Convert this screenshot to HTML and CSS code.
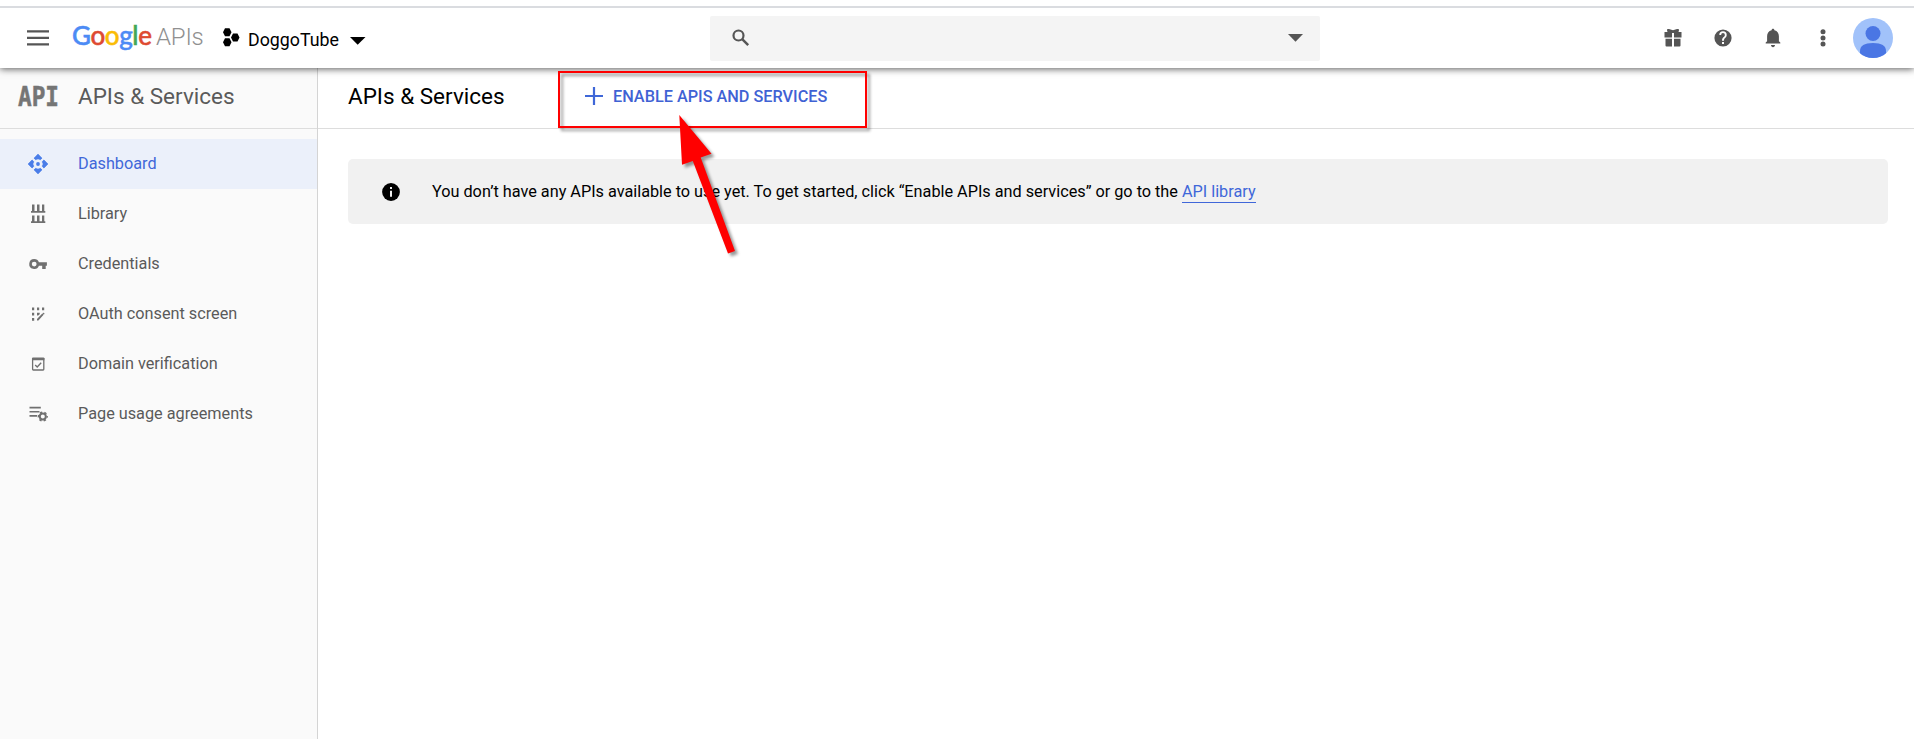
FILE: index.html
```html
<!DOCTYPE html>
<html lang="en">
<head>
<meta charset="utf-8">
<title>APIs &amp; Services</title>
<link rel="stylesheet" href="styles.css">
</head>
<body>
<header class="topbar">
  <div class="brand">
    <svg class="menu" width="24" height="16" viewBox="0 0 24 16"><path fill="#555" d="M1 .3h22v2.2H1zM1 6.8h22V9H1zM1 13.300h22v2.200H1z"/></svg>
    <div class="logo"><span class="google"><i class="b">G</i><i class="r">o</i><i class="y">o</i><i class="b">g</i><i class="g">l</i><i class="r">e</i></span><span class="apis">APIs</span></div>
    <div class="project">
      <svg width="17" height="19" viewBox="0 0 17 19"><path d="M2 .3h4.500L8.500 4.300 6.500 8.200H2L0 4.300zM10 5.500h4.500l2 4-2 4H10l-2-4zM2 10.300h4.500l2 4-2 4H2l-2-4z"/></svg>
      <span class="project-name">DoggoTube</span>
      <svg class="caret" width="16" height="8" viewBox="0 0 16 8"><path d="M0 0h15.500L7.700 7.700z"/></svg>
    </div>
  </div>
  <div class="search">
    <svg width="18" height="18" viewBox="0 0 18 18"><circle cx="6.500" cy="6.500" r="5" fill="none" stroke="#555" stroke-width="2.200"/><path d="M10.200 10.200l6 6" stroke="#555" stroke-width="2.500"/></svg>
    <svg width="15" height="8" viewBox="0 0 15 8"><path fill="#555" d="M0 0h15L7.500 7.700z"/></svg>
  </div>
  <div class="tools">
    <svg width="20" height="20" viewBox="0 0 20 20" fill="#555"><path d="M4 2.200Q3.500.6 6 1l4 1.300L14 1q2.500-.4 2 1.200L15.500 4H18.500V9.500H11V5H9v4.500H1.500V4H4.500zM2.500 10.700H9V18.500H3.500q-1 0-1-1zM11 10.700h6.500v6.800q0 1-1 1H11z"/></svg>
    <svg width="20" height="20" viewBox="2 2 20 20" fill="#555"><path d="M12 3.400a8.600 8.600 0 1 0 0 17.200 8.600 8.600 0 0 0 0-17.200zm1 14.600h-2v-2h2v2zm1.900-6.800l-.8.900c-.7.700-1.100 1.300-1.100 2.700h-2v-.5c0-1.100.4-2 1.100-2.700l1.200-1.200c.4-.4.600-.8.600-1.400a1.900 1.900 0 0 0-3.800 0H8.300a3.700 3.700 0 1 1 7.400 0c0 .9-.3 1.600-.8 2.200z"/></svg>
    <svg width="20" height="20" viewBox="0 0 20 20" fill="#555"><path d="M10 .8c.9 0 1.400.6 1.400 1.500 3.100.8 4.500 3.100 4.500 6v4.900l1.400 1.200v1H2.700v-1l1.400-1.200V8.300c0-2.900 1.400-5.200 4.500-6C8.600 1.400 9.100.8 10 .8zM8 17h4c0 1.400-.9 2.200-2 2.200S8 18.400 8 17z"/></svg>
    <svg width="20" height="20" viewBox="0 0 20 20" fill="#555"><circle cx="10" cy="3.700" r="2.500"/><circle cx="10" cy="9.900" r="2.500"/><circle cx="10" cy="16.100" r="2.500"/></svg>
    <svg class="avatar" width="40" height="40" viewBox="0 0 40 40"><defs><clipPath id="disc"><circle cx="20" cy="20" r="20"/></clipPath></defs><g clip-path="url(#disc)"><path fill="#a1c2fa" d="M0 0h40v40H0z"/><circle cx="20" cy="15.500" r="7.500" fill="#4a76e4"/><path fill="#4a76e4" d="M7 40v-7q0-8 13-8t13 8v7z"/></g></svg>
  </div>
</header>
<div class="body">
  <aside class="sidebar">
    <div class="side-title"><span class="api-mark"><span>API</span></span><span>APIs &amp; Services</span></div>
    <nav class="nav">
      <a class="item active"><svg width="20" height="20" viewBox="0 0 20 20" fill="#4a7de8"><path d="M10 0l4.200 4.200-2.100 2.100L10 4.200 7.900 6.300 5.800 4.200zM10 20l-4.200-4.200 2.100-2.100 2.100 2.100 2.100-2.100 2.100 2.100zM0 10l4.200-4.200 2.100 2.100L4.200 10l2.100 2.100-2.100 2.100zM20 10l-4.200 4.200-2.100-2.100 2.100-2.100-2.100-2.100 2.100-2.100z"/><path d="M10 0l4.200 4.200L10 5.500 5.800 4.200zM10 20l4.200-4.200L10 14.500l-4.200 1.300zM0 10l4.200-4.200L5.500 10l-1.300 4.200zM20 10l-4.200-4.200L14.500 10l1.300 4.200z"/><circle cx="10" cy="10" r="1.900"/></svg><span>Dashboard</span></a>
      <a class="item"><svg width="20" height="20" viewBox="0 0 20 20" fill="#707070"><path d="M4 .5h2.500V7H9V.5h2.500V7H14V.5h2.300V7h1v1.700H3V7h1zM4 11.500h2.500v5.800H9v-5.800h2.500v5.800H14v-5.800h2.300v5.800h1V19H3v-1.700h1z"/></svg><span>Library</span></a>
      <a class="item"><svg width="20" height="20" viewBox="0 0 20 20" fill="#707070"><path fill-rule="evenodd" d="M6.200 5a5 5 0 0 1 4.700 3.300h8v3.500h-1.200V15h-3.500v-3.200h-3.300A5 5 0 1 1 6.200 5zm0 2.700a2.400 2.400 0 1 0 0 4.800 2.400 2.400 0 0 0 0-4.800z"/></svg><span>Credentials</span></a>
      <a class="item"><svg width="20" height="20" viewBox="0 0 20 20" fill="#707070"><path d="M4 3.500h2.200v2.700H4zM9 3.500h2.200v2.700H9zM14 3.500h2.200v2.700H14zM4 8.700h2.200v2.700H4zM9 8.700h2.700v1.500L10.200 11.400H9zM4 14h2.200v2.700H4zM9 15l5.300-5.500 1.300 1.300-5.200 5.700H9zM15 8.700l1.200.2.300 1-.7.600-1.200-1.200z"/></svg><span>OAuth consent screen</span></a>
      <a class="item"><svg width="20" height="20" viewBox="0 0 20 20"><path fill="none" stroke="#707070" stroke-width="1.300" d="M4.600 5h11.200v10.300q0 .7-.7.700H5.300q-.7 0-.7-.700z"/><path fill="#707070" d="M4 4.300Q4 3.400 5 3.400h10.400q1 0 1 .9v2H4z"/><path d="M7.200 11l2 1.900 4-4.100" stroke="#707070" stroke-width="1.400" fill="none"/></svg><span>Domain verification</span></a>
      <a class="item"><svg width="20" height="20" viewBox="0 0 20 20"><path fill="#707070" d="M1.500 2.800h11.300v1.700H1.500zM1.500 6.900h10v1.700h-10zM1.500 11h7.500v1.700H1.500z"/><circle cx="14.800" cy="12.500" r="3" fill="none" stroke="#707070" stroke-width="2"/><circle cx="14.800" cy="12.500" r="4.400" fill="none" stroke="#707070" stroke-width="1.500" stroke-dasharray="2.300 2.307" stroke-dashoffset="1.150"/></svg><span>Page usage agreements</span></a>
    </nav>
  </aside>
  <main class="main">
    <div class="toolbar">
      <h1>APIs &amp; Services</h1>
      <a class="enable"><svg width="18" height="18" viewBox="0 0 18 18"><path d="M9 0v18M0 9h18" stroke="#3f67d8" stroke-width="2.200"/></svg><span>ENABLE APIS AND SERVICES</span></a>
    </div>
    <div class="notice">
      <svg width="18" height="18" viewBox="0 0 18 18"><circle cx="9" cy="9" r="8.900"/><path fill="#f1f1f1" d="M8 4h2v2H8zM8 7.800h2v6H8z"/></svg>
      <p>You don’t have any APIs available to use yet. To get started, click “Enable APIs and services” or go to the <a>API library</a></p>
    </div>
  </main>
</div>
<div class="highlight"></div>
<svg class="arrow" width="80" height="160" viewBox="660 105 80 160"><path fill="#f00" d="M679.300 115L711.500 153.700 700.700 157.500 735 251 728 253.500 692.800 161 682 164.800z"/></svg>
</body>
</html>
```
FILE: styles.css
```css
* { box-sizing: border-box; }
body {
  margin: 0;
  height: 739px;
  display: flex;
  flex-direction: column;
  overflow: hidden;
  position: relative;
  background: #fff;
  color: #000;
  font: 16.25px/24px Roboto, sans-serif;
}
svg { display: block; flex: none; }

.topbar {
  height: 68px;
  flex: none;
  padding-top: 8px;
  display: grid;
  grid-template-columns: 710px 610px 1fr;
  align-items: center;
  background: linear-gradient(#fff 6px, #dadce0 6px, #dadce0 8px, #fff 8px);
  box-shadow: 0 1px 7px rgba(0, 0, 0, .65);
  z-index: 1;
}
.brand { display: flex; align-items: center; height: 60px; padding-left: 26px; }
.logo { display: flex; align-items: baseline; margin: -6px 0 0 22px; height: 34px; line-height: 34px; width: 151px; }
.google { width: 84px; font: 500 26px/34px Lato, sans-serif; letter-spacing: -.4px; -webkit-text-stroke: .5px; }
.google i { font-style: normal; -webkit-text-stroke-color: currentColor; }
.b { color: #4c8bf5; }
.r { color: #de4a31; }
.y { color: #fabc05; }
.g { color: #43a756; }
.apis { font-weight: 300; font-size: 24px; letter-spacing: -.2px; color: #909090; }
.project { display: flex; align-items: center; }
.project svg { margin-top: -1px; }
.project-name { font-size: 17.8px; margin: 4px 11px 0 8px; }
.project .caret { margin-top: 5px; }
.search {
  height: 45px;
  width: 610px;
  padding: 0 17px 0 22px;
  display: flex;
  align-items: center;
  justify-content: space-between;
  border-radius: 2px;
  background: #f4f4f4;
}
.tools { display: flex; align-items: center; justify-content: flex-end; gap: 30px; padding-right: 21px; }
.avatar { margin-left: -10px; }

.body { flex: 1; display: flex; min-height: 0; }
.sidebar { width: 318px; flex: none; background: #fafafa; border-right: 1px solid #d4d4d4; color: #5a5a5a; }
.side-title { height: 61px; padding: 0 0 4px 18px; display: flex; align-items: center; border-bottom: 1px solid #ddd; font-size: 22.5px; }
.api-mark { width: 60px; font: bold 27px/30px "DejaVu Sans Mono", monospace; color: #757575; -webkit-text-stroke: .5px #757575; }
.api-mark span { display: inline-block; transform: translateY(1px) scaleX(.84); transform-origin: left; }
.nav { padding-top: 10px; }
.item { height: 50px; display: flex; align-items: center; padding-left: 28px; gap: 30px; }
.item svg { margin-top: 0; }
.item span { margin-top: -1px; }
.active { background: #ebf0fa; color: #4067d9; }

.main { flex: 1; }
.toolbar { height: 61px; padding: 0 0 4px 30px; display: flex; align-items: center; border-bottom: 1px solid #ddd; }
h1 { margin: 0; width: 237px; font-weight: 400; font-size: 22.5px; line-height: 30px; }
.enable { display: flex; align-items: center; gap: 10px; font-weight: 500; color: #3f62d4; }
.enable span { margin-top: 2px; }
.notice { margin: 30px 26px 0 30px; height: 65px; padding-left: 34px; display: flex; align-items: center; gap: 32px; border-radius: 5px; background: #f1f1f1; }
.notice p { margin: 0; white-space: nowrap; letter-spacing: -.008px; }
.notice a { color: #4067d9; padding-bottom: 1px; border-bottom: 1px solid #4067d9; }

/* Callout drawn over the page */
.highlight { position: absolute; left: 558px; top: 71px; width: 309px; height: 57px; z-index: 2; border: 2px solid #f00; filter: drop-shadow(3px 3px 1.5px rgba(0, 0, 0, .4)); }
.arrow { position: absolute; left: 660px; top: 105px; z-index: 3; filter: drop-shadow(3px 3px 1.5px rgba(0, 0, 0, .4)); }
```
